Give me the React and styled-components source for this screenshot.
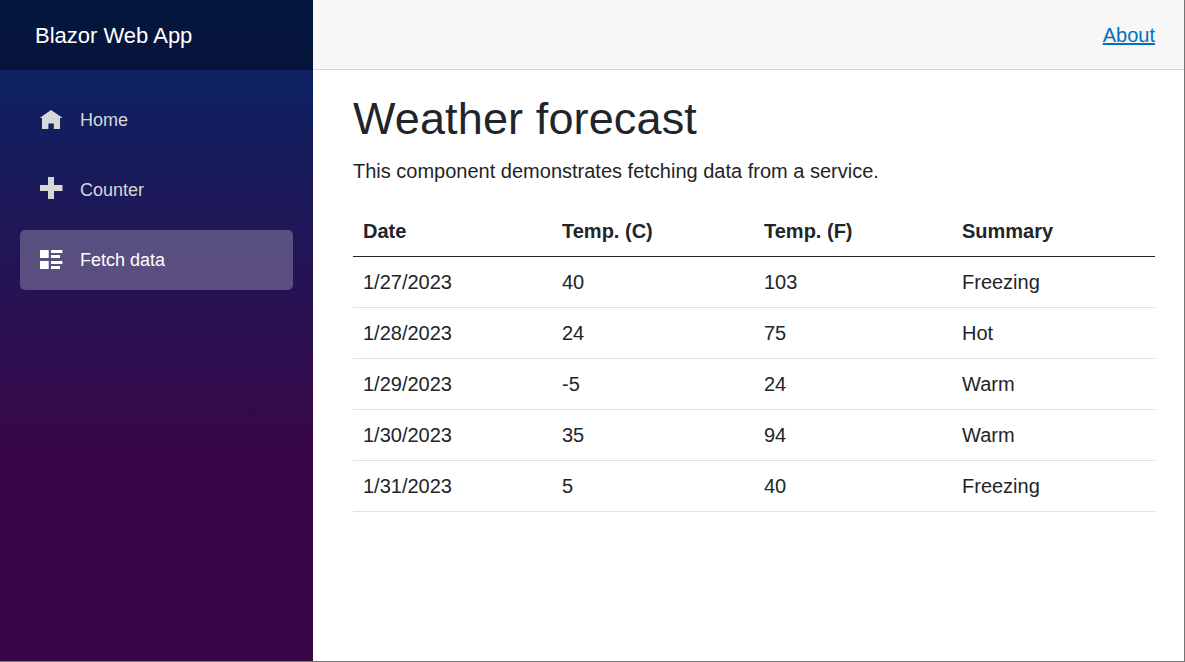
import React from "react";
import styled, { createGlobalStyle } from "styled-components";

const GlobalStyle = createGlobalStyle`
  * { box-sizing: border-box; }
  body {
    margin: 0;
    overflow: hidden;
    font-family: "Liberation Sans", Arial, sans-serif;
    font-size: 20px;
    line-height: 30px;
    color: #212529;
    background: #fff;
  }
`;

const Page = styled.div`
  display: flex;
  height: 662px;
  border-right: 1px solid #747474;
  border-bottom: 1px solid #747474;
`;

const Sidebar = styled.aside`
  width: 313px;
  flex: none;
  background: linear-gradient(180deg, rgb(5, 39, 103) 0%, #3a0647 70%);
`;

const Brand = styled.div`
  height: 70px;
  padding: 21px 35px 19px;
  font-size: 22px;
  color: #fff;
  background: rgba(0, 0, 0, 0.4);
`;

const Nav = styled.nav`
  display: flex;
  flex-direction: column;
  gap: 10px;
  padding: 20px;
`;

const NavItem = styled.a`
  display: flex;
  align-items: center;
  height: 60px;
  padding: 0 20px;
  border-radius: 5px;
  font-size: 18px;
  color: ${(p) => (p.$active ? "#fff" : "#d7d7d7")};
  background: ${(p) => (p.$active ? "rgba(255, 255, 255, 0.25)" : "transparent")};
`;

const Icon = styled.svg`
  width: 23px;
  height: 26px;
  margin-right: 17px;
  fill: currentColor;
`;

const Main = styled.main`
  flex: 1;
`;

const TopBar = styled.header`
  display: flex;
  align-items: center;
  justify-content: flex-end;
  height: 70px;
  padding-right: 29px;
  background: #f7f7f7;
  border-bottom: 1px solid #d6d5d5;
`;

const Link = styled.a`
  color: #0071c1;
  text-decoration: underline;
  text-decoration-thickness: 2px;
  text-underline-offset: 1px;
`;

const Content = styled.article`
  padding: 22px 29px 0 40px;
`;

const Title = styled.h1`
  margin: 0 0 10px;
  font-size: 45px;
  font-weight: 400;
  letter-spacing: 0.13px;
  line-height: 54px;
`;

const Intro = styled.p`
  margin: 0 0 20px;
`;

const Table = styled.table`
  width: 100%;
  table-layout: fixed;
  border-collapse: separate;
  border-spacing: 0;
`;

const Col = styled.col`
  width: ${(p) => p.$w}px;
`;

const HeadCell = styled.th`
  height: 51px;
  padding: 0 10px;
  text-align: left;
  border-bottom: 1px solid #212529;
`;

const Cell = styled.td`
  height: 51px;
  padding: 0 10px;
  border-bottom: 1px solid #dee2e6;
`;

const forecasts = [
  ["1/27/2023", "40", "103", "Freezing"],
  ["1/28/2023", "24", "75", "Hot"],
  ["1/29/2023", "-5", "24", "Warm"],
  ["1/30/2023", "35", "94", "Warm"],
  ["1/31/2023", "5", "40", "Freezing"],
];

export default function App() {
  return (
    <>
      <GlobalStyle />
      <Page>
        <Sidebar>
          <Brand>Blazor Web App</Brand>
          <Nav>
            <NavItem>
              <Icon viewBox="0 0 23 26">
                <path d="M11 3 0.3 10.5V11H2v11h6.4v-5.4h5.4V22H20V11h2v-.5z" />
              </Icon>
              Home
            </NavItem>
            <NavItem>
              <Icon viewBox="0 0 23 26">
                <path d="M8 0h6v8h8.5v6H14v8H8v-8H0V8h8z" />
              </Icon>
              Counter
            </NavItem>
            <NavItem $active>
              <Icon viewBox="0 0 23 26">
                <path d="M0 3h8.7v8H0zM0 14h8.7v8H0zM11 3h11.4v3H11zM11 8h9v3h-9zM11 14h11.4v3H11zM11 19h9v3h-9z" />
              </Icon>
              Fetch data
            </NavItem>
          </Nav>
        </Sidebar>
        <Main>
          <TopBar>
            <Link>About</Link>
          </TopBar>
          <Content>
            <Title>Weather forecast</Title>
            <Intro>This component demonstrates fetching data from a service.</Intro>
            <Table>
              <colgroup>
                <Col $w={199} />
                <Col $w={202} />
                <Col $w={198} />
                <Col $w={203} />
              </colgroup>
              <thead>
                <tr>
                  <HeadCell>Date</HeadCell>
                  <HeadCell>Temp. (C)</HeadCell>
                  <HeadCell>Temp. (F)</HeadCell>
                  <HeadCell>Summary</HeadCell>
                </tr>
              </thead>
              <tbody>
                {forecasts.map((row) => (
                  <tr key={row[0]}>
                    {row.map((value, i) => (
                      <Cell key={i}>{value}</Cell>
                    ))}
                  </tr>
                ))}
              </tbody>
            </Table>
          </Content>
        </Main>
      </Page>
    </>
  );
}
